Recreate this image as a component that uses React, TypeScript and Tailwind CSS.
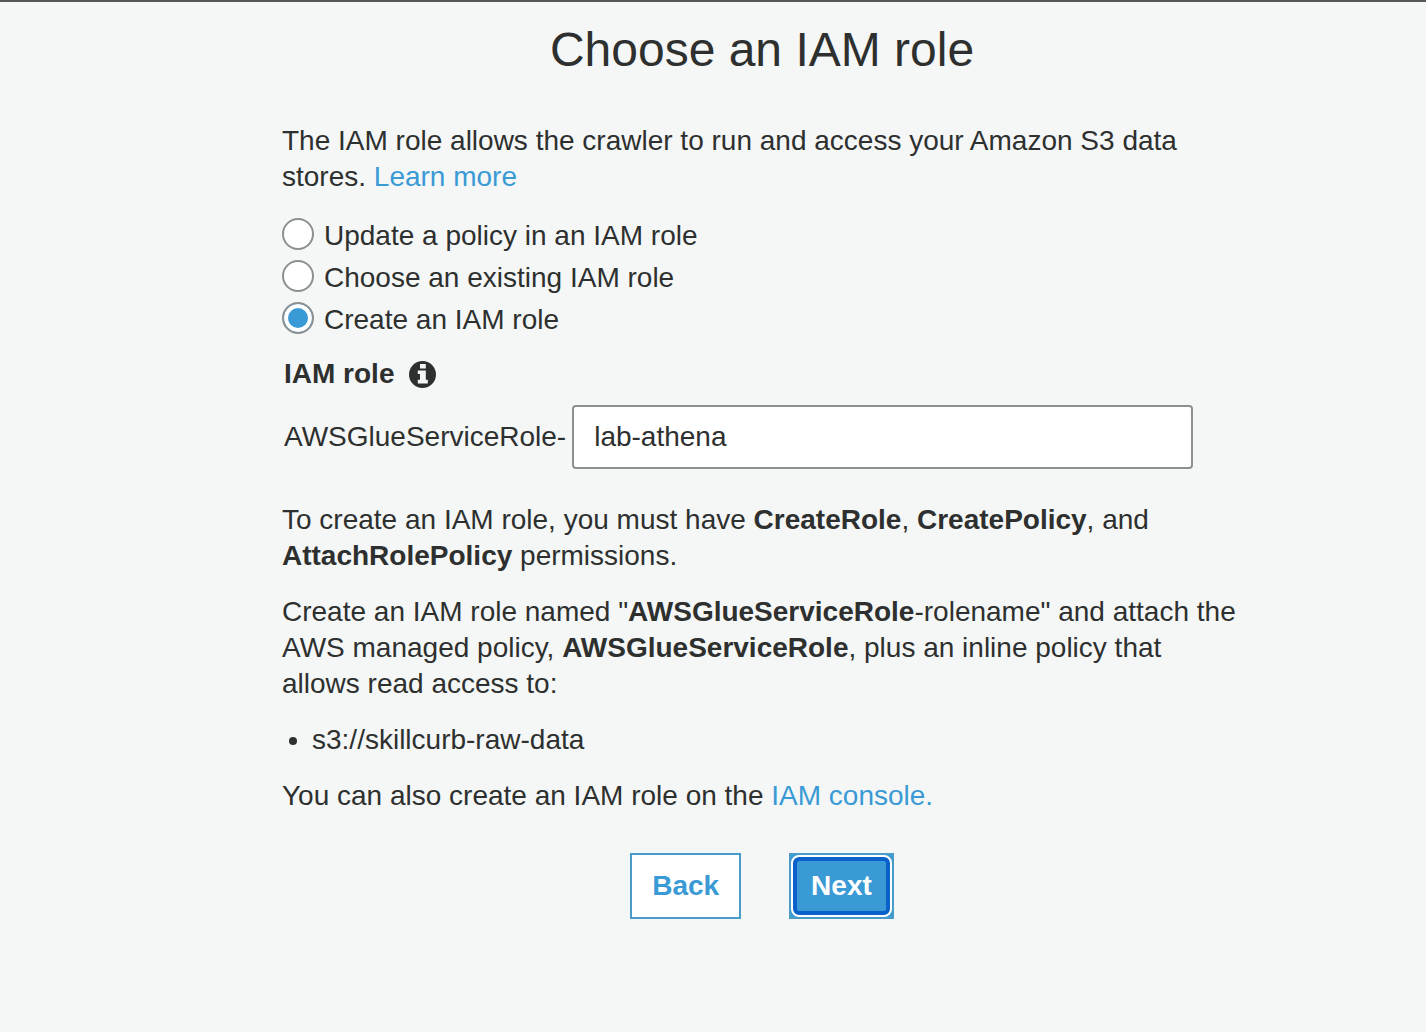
import React, { useState } from "react";

const roleOptions = [
  { id: "update", label: "Update a policy in an IAM role" },
  { id: "existing", label: "Choose an existing IAM role" },
  { id: "create", label: "Create an IAM role" },
];

function InfoIcon() {
  return (
    <svg viewBox="0 0 28 28" className="size-7" aria-hidden="true">
      <circle cx="14.5" cy="14.5" r="13.5" fill="#2d302f" />
      <path d="M12 4h5.8v4.4H12zM9.8 10.6h8v9.2h2v3.7h-10v-3.7h2.2v-5.7H9.8z" fill="#f5f7f6" />
    </svg>
  );
}

export default function App() {
  const [mode, setMode] = useState("create");
  const [roleName, setRoleName] = useState("lab-athena");

  return (
    <div className="min-h-screen border-t-2 border-[#545859] bg-[#f5f7f6] pb-28 font-['Liberation_Sans',Arial,sans-serif] text-[28px] leading-9 text-[#2d302f] lg:pl-[98px]">
      <main className="mx-auto w-full max-w-[960px]">
        <h1 className="pt-5 text-center text-[48px] leading-[56px]">Choose an IAM role</h1>

        <p className="mt-[45px]">
          The IAM role allows the crawler to run and access your Amazon S3 data stores.{" "}
          <a href="#learn" className="text-[#3a9ad5]">Learn more</a>
        </p>

        <fieldset aria-label="Role options" className="mt-[23px]">
          {roleOptions.map((o) => (
            <div key={o.id} className="flex h-[42px] items-start gap-2.5">
              <input
                id={o.id}
                type="radio"
                name="mode"
                checked={mode === o.id}
                onChange={() => setMode(o.id)}
                className="size-8 shrink-0 appearance-none rounded-full border-2 border-[#8c9092] bg-white checked:bg-[#3a9ad5] checked:shadow-[inset_0_0_0_4px_white]"
              />
              <label htmlFor={o.id}>{o.label}</label>
            </div>
          ))}
        </fieldset>

        <div className="mt-3 flex items-center gap-3.5 pl-0.5">
          <label htmlFor="role" className="font-bold">IAM role</label>
          <InfoIcon />
        </div>
        <div className="mt-[13px] flex items-center gap-1.5 pl-0.5 pr-[49px]">
          <span>AWSGlueServiceRole-</span>
          <input
            id="role"
            type="text"
            value={roleName}
            onChange={(e) => setRoleName(e.target.value)}
            className="h-16 min-w-0 flex-1 rounded border-2 border-[#8c9092] bg-white px-5"
          />
        </div>

        <p className="mt-[33px]">
          To create an IAM role, you must have <b>CreateRole</b>, <b>CreatePolicy</b>, and <b>AttachRolePolicy</b> permissions.
        </p>
        <p className="mt-5">
          Create an IAM role named "<b>AWSGlueServiceRole</b>-rolename" and attach the AWS managed policy, <b>AWSGlueServiceRole</b>, plus an inline policy that allows read access to:
        </p>
        <ul className="mt-5 list-disc pl-[30px]">
          <li>s3://skillcurb-raw-data</li>
        </ul>
        <p className="mt-5">
          You can also create an IAM role on the <a href="#iam" className="text-[#3a9ad5]">IAM console.</a>
        </p>

        <div className="mt-[39px] flex justify-center gap-12 font-bold">
          <button type="button" className="border-2 border-[#4a9cc8] bg-white px-5 py-[13px] text-[#3a9ad5]">Back</button>
          <button type="button" className="border-2 border-[#4a9cc8] bg-[#3a9ad5] p-0.5 text-white">
            <span className="block rounded-md border-4 border-[#0b60ca] px-3.5 py-[7px] outline-2 outline-white">Next</span>
          </button>
        </div>
      </main>
    </div>
  );
}
